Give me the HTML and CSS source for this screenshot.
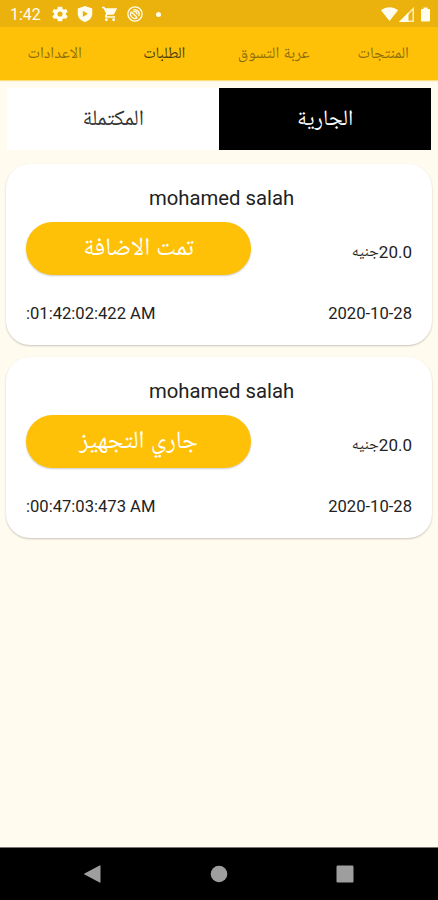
FILE: index.html
```html
<!DOCTYPE html>
<html lang="ar" dir="rtl">
<head>
  <meta charset="UTF-8">
  <meta name="viewport" content="width=device-width, initial-scale=1.0">
  <title>الطلبات</title>
  <link rel="stylesheet" href="styles.css">
</head>
<body>
  <div class="status-bar" dir="ltr">
    <span class="clock">1:42</span>
    <div class="status-icons">
      <!-- settings -->
      <svg viewBox="2 2 20 20"><path fill-rule="evenodd" d="M19.400 13a7.500 7.500 0 0 0 0-2l2.200-1.700-2.100-3.600-2.600 1a7 7 0 0 0-1.700-1L14.800 3H9.200l-.4 2.700a7 7 0 0 0-1.700 1l-2.600-1-2.100 3.600L4.600 11a7.500 7.500 0 0 0 0 2l-2.200 1.700 2.100 3.600 2.600-1a7 7 0 0 0 1.700 1l.4 2.700h5.600l.4-2.700a7 7 0 0 0 1.700-1l2.600 1 2.100-3.600zM12 15.200a3.200 3.200 0 1 1 0-6.400 3.200 3.200 0 0 1 0 6.400z"/></svg>
      <!-- play protect -->
      <svg viewBox="1 1 22 22"><path fill-rule="evenodd" d="M12 1L2 4.500v7c0 5.500 4.500 9.700 10 11.500 5.500-1.800 10-6 10-11.500v-7zM9 7.500l7 4.300-7 4.300z"/></svg>
      <!-- cart -->
      <svg viewBox="1 1 22 22"><path d="M7 18a2 2 0 1 0 0 4 2 2 0 0 0 0-4zM1 2v2h2l3.600 7.600-1.400 2.400C4.500 15.400 5.500 17 7 17h12v-2H7.400l1.100-2h7.500c.7 0 1.400-.4 1.700-1L21.700 4.500C22 3.800 21.500 4 20.800 4H5.200l-.9-2zM17 18a2 2 0 1 0 0 4 2 2 0 0 0 0-4z"/></svg>
      <svg viewBox="0 0 24 24" class="line-icon"><circle cx="12" cy="12" r="10.700"/><path d="M6.500 8.500a6.500 6.500 0 0 0 9 9M9 6.300a6.500 6.500 0 0 1 8.600 8.700M6.500 8.500l9 9M9.500 8.500h4l2 4"/></svg>
      <span class="more-dot"></span>
    </div>
    <div class="signal-icons">
      <svg class="wifi" viewBox="0 0 17 14"><path d="M0 3.200C5-.9 12-.9 17 3.200L8.500 14z"/></svg>
      <svg class="cell" viewBox="0 0 15 15"><path class="cell-outline" d="M1.800 14.200H14.200V1.800z"/><path d="M0 15L9.500 5.500V15z"/></svg>
      <svg class="battery" viewBox="0 0 9 14"><path d="M2.500 0h4v1.500H8a1 1 0 0 1 1 1V13a1 1 0 0 1-1 1H1a1 1 0 0 1-1-1V2.500a1 1 0 0 1 1-1h1.500z"/></svg>
    </div>
  </div>

  <nav class="tabs">
    <a class="tab">المنتجات</a>
    <a class="tab">عربة التسوق</a>
    <a class="tab active">الطلبات</a>
    <a class="tab">الاعدادات</a>
  </nav>

  <main class="content">
    <div class="filter">
      <div class="filter-item selected">الجارية</div>
      <div class="filter-item">المكتملة</div>
    </div>

    <article class="order">
      <h2 class="customer">mohamed salah</h2>
      <div class="order-row">
        <span class="price">20.0<span class="currency">جنيه</span></span>
        <button class="state">تمت الاضافة</button>
      </div>
      <div class="order-date">
        <span dir="ltr">2020-10-28</span>
        <span dir="ltr">:01:42:02:422 AM</span>
      </div>
    </article>

    <article class="order">
      <h2 class="customer">mohamed salah</h2>
      <div class="order-row">
        <span class="price">20.0<span class="currency">جنيه</span></span>
        <button class="state">جاري التجهيز</button>
      </div>
      <div class="order-date">
        <span dir="ltr">2020-10-28</span>
        <span dir="ltr">:00:47:03:473 AM</span>
      </div>
    </article>
  </main>

  <footer class="nav-bar" dir="ltr">
    <svg viewBox="0 0 18 18"><path d="M17.500 1v16a.6.6 0 0 1-.9.5L1.500 9.500a.6.6 0 0 1 0-1L16.600.5a.6.6 0 0 1 .9.500z"/></svg>
    <svg viewBox="0 0 18 18"><circle cx="9" cy="9" r="8.300"/></svg>
    <svg viewBox="0 0 18 18"><rect x=".5" y=".5" width="17" height="17" rx="1.200"/></svg>
  </footer>
</body>
</html>
```

FILE: styles.css
```css
* {
  margin: 0;
  padding: 0;
  box-sizing: border-box;
}

body {
  font-family: Roboto, "Noto Naskh Arabic UI", "Noto Naskh Arabic", "DejaVu Sans", sans-serif;
  background-color: #fffbee;
  color: #222;
  height: 900px;
  display: flex;
  flex-direction: column;
  overflow: hidden;
}

.status-bar {
  height: 27px;
  background: #ebb10d;
  color: #fffdf0;
  display: flex;
  align-items: center;
  padding: 1px 8px 0 10px;
}

.status-bar svg {
  fill: #fffdf0;
  display: block;
}

.clock {
  font-size: 16px;
  width: 42px;
}

.status-icons {
  display: flex;
  align-items: center;
  gap: 9px;
}

.status-icons svg {
  width: 16px;
  height: 16px;
}

.status-icons .line-icon {
  fill: none;
  stroke: #fffdf0;
  stroke-width: 2;
}

.more-dot {
  width: 5px;
  height: 5px;
  border-radius: 50%;
  background: #fffdf0;
  margin-left: 4px;
}

.signal-icons {
  display: flex;
  align-items: center;
  margin-left: auto;
}

.wifi {
  width: 17px;
  height: 14px;
}

.cell {
  width: 15px;
  height: 15px;
  margin: 0 7px 0 1px;
}

.status-bar .cell-outline {
  fill: none;
  stroke: #fdeeb8;
  stroke-width: 1.5;
}

.battery {
  width: 9px;
  height: 15px;
}

.tabs {
  height: 53px;
  background: #ffc107;
  box-shadow: 0 1px 1px #ffdc7c;
  display: grid;
  grid-template-columns: repeat(4, 1fr);
}

.tab {
  display: flex;
  align-items: center;
  justify-content: center;
  font-size: 16px;
  color: #8d6d0c;
}

.tab.active {
  color: #4e3d0b;
}

.content {
  flex: 1;
  padding: 8px 6px 0;
}

.filter {
  height: 62px;
  margin: 0 1px 14px;
  display: grid;
  grid-template-columns: 1fr 1fr;
  background: #fff;
}

.filter-item {
  display: flex;
  align-items: center;
  justify-content: center;
  font-size: 22px;
  color: #333;
}

.filter-item.selected {
  background: #000;
  color: #fff;
}

.order {
  height: 181px;
  margin-bottom: 12px;
  padding: 22px 20px 0;
  background: #fff;
  border-radius: 24px;
  box-shadow: 0 1px 2px rgba(0, 0, 0, 0.22);
}

.customer {
  font-size: 20.3px;
  font-weight: 400;
  line-height: 25px;
  text-align: center;
  padding-left: 5px;
}

.order-row {
  display: flex;
  align-items: center;
  justify-content: space-between;
  margin-top: 11px;
}

.price {
  font-size: 17px;
  line-height: 20px;
  padding-top: 8px;
}

.currency {
  font-size: 15.5px;
}

.state {
  width: 225px;
  height: 53px;
  padding-top: 2px;
  border: none;
  border-radius: 27px;
  background: #ffc107;
  box-shadow: 0 1px 2px rgba(0, 0, 0, 0.2);
  color: #fff;
  font-family: inherit;
  font-size: 25px;
  line-height: 51px;
}

.order-date {
  display: flex;
  justify-content: space-between;
  margin-top: 29px;
  font-size: 16.6px;
  line-height: 20px;
}

.nav-bar {
  height: 53px;
  background: #000;
  border-top: 1px solid #77756f;
  display: flex;
  align-items: center;
  justify-content: space-between;
  padding: 0 84px 0 83px;
}

.nav-bar svg {
  width: 18px;
  height: 18px;
  fill: #9e9e9e;
}
```
